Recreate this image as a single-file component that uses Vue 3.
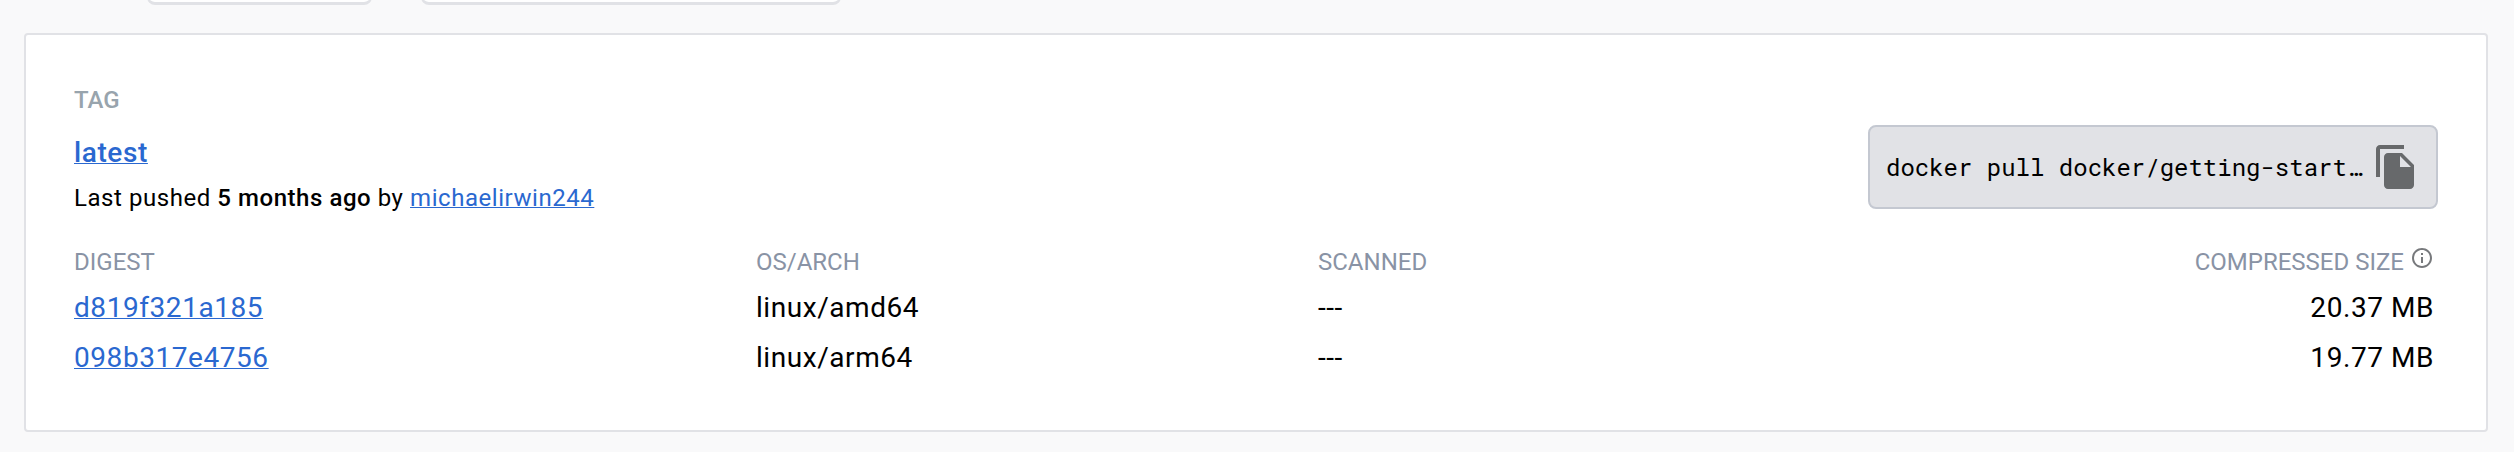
<script setup>
const images = [
  { digest: 'd819f321a185', arch: 'linux/amd64', scanned: '---', size: '20.37 MB' },
  { digest: '098b317e4756', arch: 'linux/arm64', scanned: '---', size: '19.77 MB' },
]
</script>

<template>
  <div class="page">
    <div class="filters">
      <div class="filter sort"></div>
      <div class="filter search"></div>
    </div>
    <section class="card">
      <header class="top">
        <div class="info">
          <div class="tag-label">TAG</div>
          <a class="tag-name">latest</a>
          <div class="pushed">Last pushed <b>5 months ago</b> by <a>michaelirwin244</a></div>
        </div>
        <div class="command">
          <code>docker pull docker/getting-start…</code>
          <svg class="copy" viewBox="0 0 24 24">
            <path d="M16 1H4c-1.1 0-2 .9-2 2v14h2V3h12V1zm-1 4l6 6v10c0 1.1-.9 2-2 2H7.99C6.89 23 6 22.1 6 21V7c0-1.1.89-2 1.99-2h7zm-1 7h5.5L14 6.5V12z" />
          </svg>
        </div>
      </header>
      <div class="row head">
        <span>DIGEST</span>
        <span>OS/ARCH</span>
        <span>SCANNED</span>
        <span class="size">
          COMPRESSED SIZE
          <svg class="hint" viewBox="0 0 24 24">
            <path d="M11 7h2v2h-2zm0 4h2v6h-2zm1-9C6.48 2 2 6.48 2 12s4.48 10 10 10 10-4.48 10-10S17.52 2 12 2zm0 18c-4.41 0-8-3.59-8-8s3.59-8 8-8 8 3.59 8 8-3.59 8-8 8z" />
          </svg>
        </span>
      </div>
      <div v-for="image in images" :key="image.digest" class="row">
        <span><a>{{ image.digest }}</a></span>
        <span>{{ image.arch }}</span>
        <span>{{ image.scanned }}</span>
        <span class="size">{{ image.size }}</span>
      </div>
    </section>
  </div>
</template>

<style>
body {
  background: #f9f9fa;
}
</style>

<style scoped>
.page {
  box-sizing: border-box;
  height: 452px;
  overflow: hidden;
  padding: 0 26px 0 24px;
  background: #f9f9fa;
  font-family: Roboto, "Liberation Sans", sans-serif;
  color: #000;
}
.filters {
  display: flex;
  gap: 49px;
  height: 33px;
  padding-left: 123px;
  align-items: flex-start;
}
.filter {
  box-sizing: border-box;
  height: 80px;
  margin-top: -75px;
  border: 2px solid #e1e2e6;
  border-bottom-width: 3px;
  border-radius: 8px;
  background: #fff;
}
.sort {
  width: 225px;
}
.search {
  width: 420px;
}
.card {
  box-sizing: border-box;
  height: 399px;
  padding: 49px 52px 0 48px;
  border: 2px solid #e1e2e6;
  border-radius: 4px;
  background: #fff;
}
.top {
  display: flex;
  justify-content: space-between;
  height: 158px;
}
.info {
  display: flex;
  flex-direction: column;
  align-items: flex-start;
}
a {
  color: #2a68d0;
  text-decoration: underline;
  text-decoration-thickness: 1px;
}
.tag-label {
  font-size: 24px;
  line-height: 32px;
  font-weight: 500;
  color: #98a4ad;
}
.tag-name {
  margin-top: 17px;
  font-size: 28px;
  line-height: 40px;
  font-weight: 500;
  letter-spacing: 0.6px;
}
.pushed {
  margin-top: 9px;
  font-size: 24px;
  line-height: 32px;
  letter-spacing: 0.55px;
}
.pushed b {
  font-weight: 500;
}
.command {
  box-sizing: border-box;
  display: flex;
  align-items: center;
  gap: 8px;
  width: 570px;
  height: 84px;
  margin: 41px -4px 0 0;
  padding: 0 16px;
  border: 2px solid #c4c8d1;
  border-radius: 8px;
  background: #e1e2e6;
}
.command code {
  width: 478px;
  white-space: nowrap;
  font: 24px/32px "Roboto Mono", "Liberation Mono", monospace;
}
.copy {
  flex: none;
  width: 48px;
  height: 48px;
  fill: #67696b;
}
.row {
  display: grid;
  grid-template-columns: 682px 562px 1fr 400px;
  height: 50px;
  font-size: 28px;
  line-height: 50px;
  letter-spacing: 0.56px;
}
.head {
  height: 41px;
  font-size: 24px;
  line-height: 40px;
  letter-spacing: 0;
  color: #8993a5;
}
.size {
  display: flex;
  justify-content: flex-end;
  gap: 6px;
}
.hint {
  width: 24px;
  height: 24px;
  margin-top: 4px;
  fill: #77797c;
}
</style>
